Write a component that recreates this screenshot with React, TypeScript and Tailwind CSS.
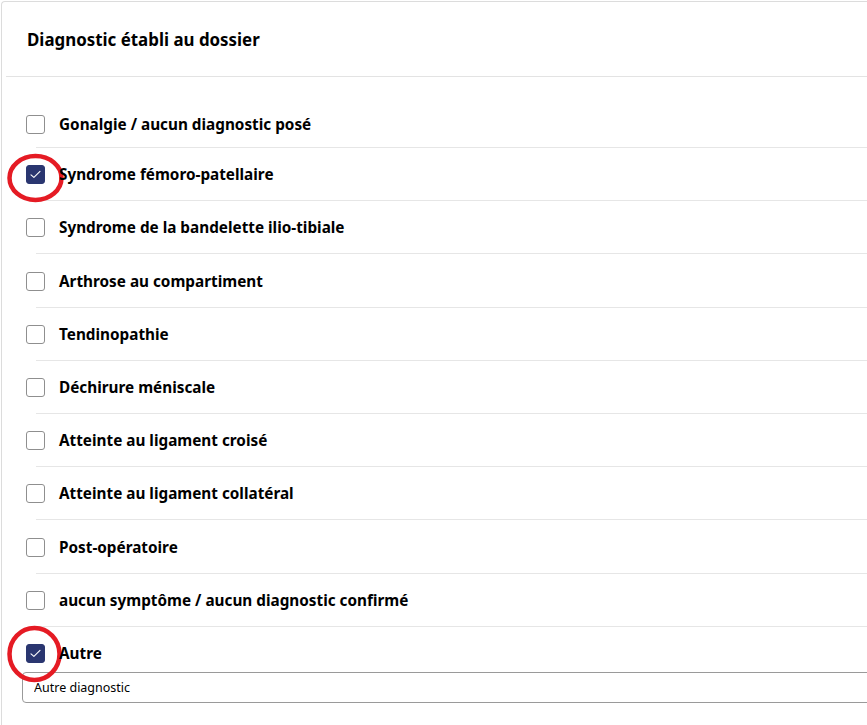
import React, { useState } from "react";

const OPTIONS: Array<string> = [
  "Gonalgie / aucun diagnostic posé",
  "Syndrome fémoro-patellaire",
  "Syndrome de la bandelette ilio-tibiale",
  "Arthrose au compartiment",
  "Tendinopathie",
  "Déchirure méniscale",
  "Atteinte au ligament croisé",
  "Atteinte au ligament collatéral",
  "Post-opératoire",
  "aucun symptôme / aucun diagnostic confirmé",
  "Autre",
];

const Checkbox: React.FC<{ checked: boolean; onToggle: () => void }> = ({
  checked,
  onToggle,
}) => {
  return (
    <button
      type="button"
      onClick={onToggle}
      className={
        checked
          ? "w-[19px] h-[19px] shrink-0 rounded-[3px] bg-[#2a3670] border border-[#2a3670] flex items-center justify-center"
          : "w-[19px] h-[19px] shrink-0 rounded-[3px] bg-white border border-[#8f8f8f]"
      }
    >
      {checked && (
        <svg width="11" height="9" viewBox="0 0 11 9" fill="none">
          <path
            d="M1 4.8 L3.9 7.4 L10 1.4"
            stroke="#ffffff"
            strokeWidth="1.1"
            strokeLinecap="round"
            strokeLinejoin="round"
          />
        </svg>
      )}
    </button>
  );
};

// red annotation rings drawn over the checked boxes
const Ring: React.FC<{ tall?: boolean }> = ({ tall }) =>
  tall ? (
    <svg
      className="absolute left-[-19px] top-[-19px] pointer-events-none"
      width="56"
      height="58"
      viewBox="0 0 56 58"
      fill="none"
    >
      <ellipse cx="27.5" cy="29" rx="25" ry="26" stroke="#e51b24" strokeWidth="4.5" />
    </svg>
  ) : (
    <svg
      className="absolute left-[-19px] top-[-12px] pointer-events-none"
      width="57"
      height="50"
      viewBox="0 0 57 50"
      fill="none"
    >
      <ellipse cx="28.5" cy="25" rx="26" ry="22" stroke="#e51b24" strokeWidth="4.5" />
    </svg>
  );

export default function App() {
  const [checked, setChecked] = useState<Record<string, boolean>>({
    "Syndrome fémoro-patellaire": true,
    Autre: true,
  });

  const toggle = (label: string) =>
    setChecked((c) => ({ ...c, [label]: !c[label] }));

  return (
    <div className="w-full h-[725px] bg-white overflow-hidden pl-[1px] pt-[1px] font-['Noto_Sans',sans-serif] text-black">
      <div className="h-full border-l border-t border-[#dcdcdc] rounded-tl-[4px]">
        {/* Header */}
        <div className="ml-[4px] h-[75px] border-b border-[#e3e3e3] flex items-center pl-[21px] pt-[2px]">
          <h2 className="text-[16.9px] font-bold">Diagnostic établi au dossier</h2>
        </div>

        {/* Options */}
        <div className="pt-[38px]">
          {OPTIONS.map((label, i) => {
            const isLast = i === OPTIONS.length - 1;
            const on = !!checked[label];
            return (
              <div key={label}>
                <div
                  className={
                    i === 0
                      ? "flex items-center pl-[24px] pb-[13px]"
                      : isLast
                      ? "flex items-center pl-[24px] pt-[17.2px]"
                      : "flex items-center pl-[24px] pt-[17.2px] pb-[16px]"
                  }
                >
                  <div className="relative flex">
                    <Checkbox checked={on} onToggle={() => toggle(label)} />
                    {on && <Ring tall={isLast} />}
                  </div>
                  <span className="ml-[14px] text-[15.3px] leading-[19px] font-bold relative">
                    {label}
                  </span>
                </div>
                {!isLast && <div className="ml-[34px] h-px bg-[#e6e6e6]" />}
              </div>
            );
          })}

          {checked["Autre"] && (
            <div className="pl-[20px] pt-[9px]">
              <input
                type="text"
                defaultValue="Autre diagnostic"
                className="w-[900px] h-[31px] border border-[#9a9a9a] rounded-[4px] px-[11px] text-[12.5px] text-black outline-none"
              />
            </div>
          )}
        </div>
      </div>
    </div>
  );
}
